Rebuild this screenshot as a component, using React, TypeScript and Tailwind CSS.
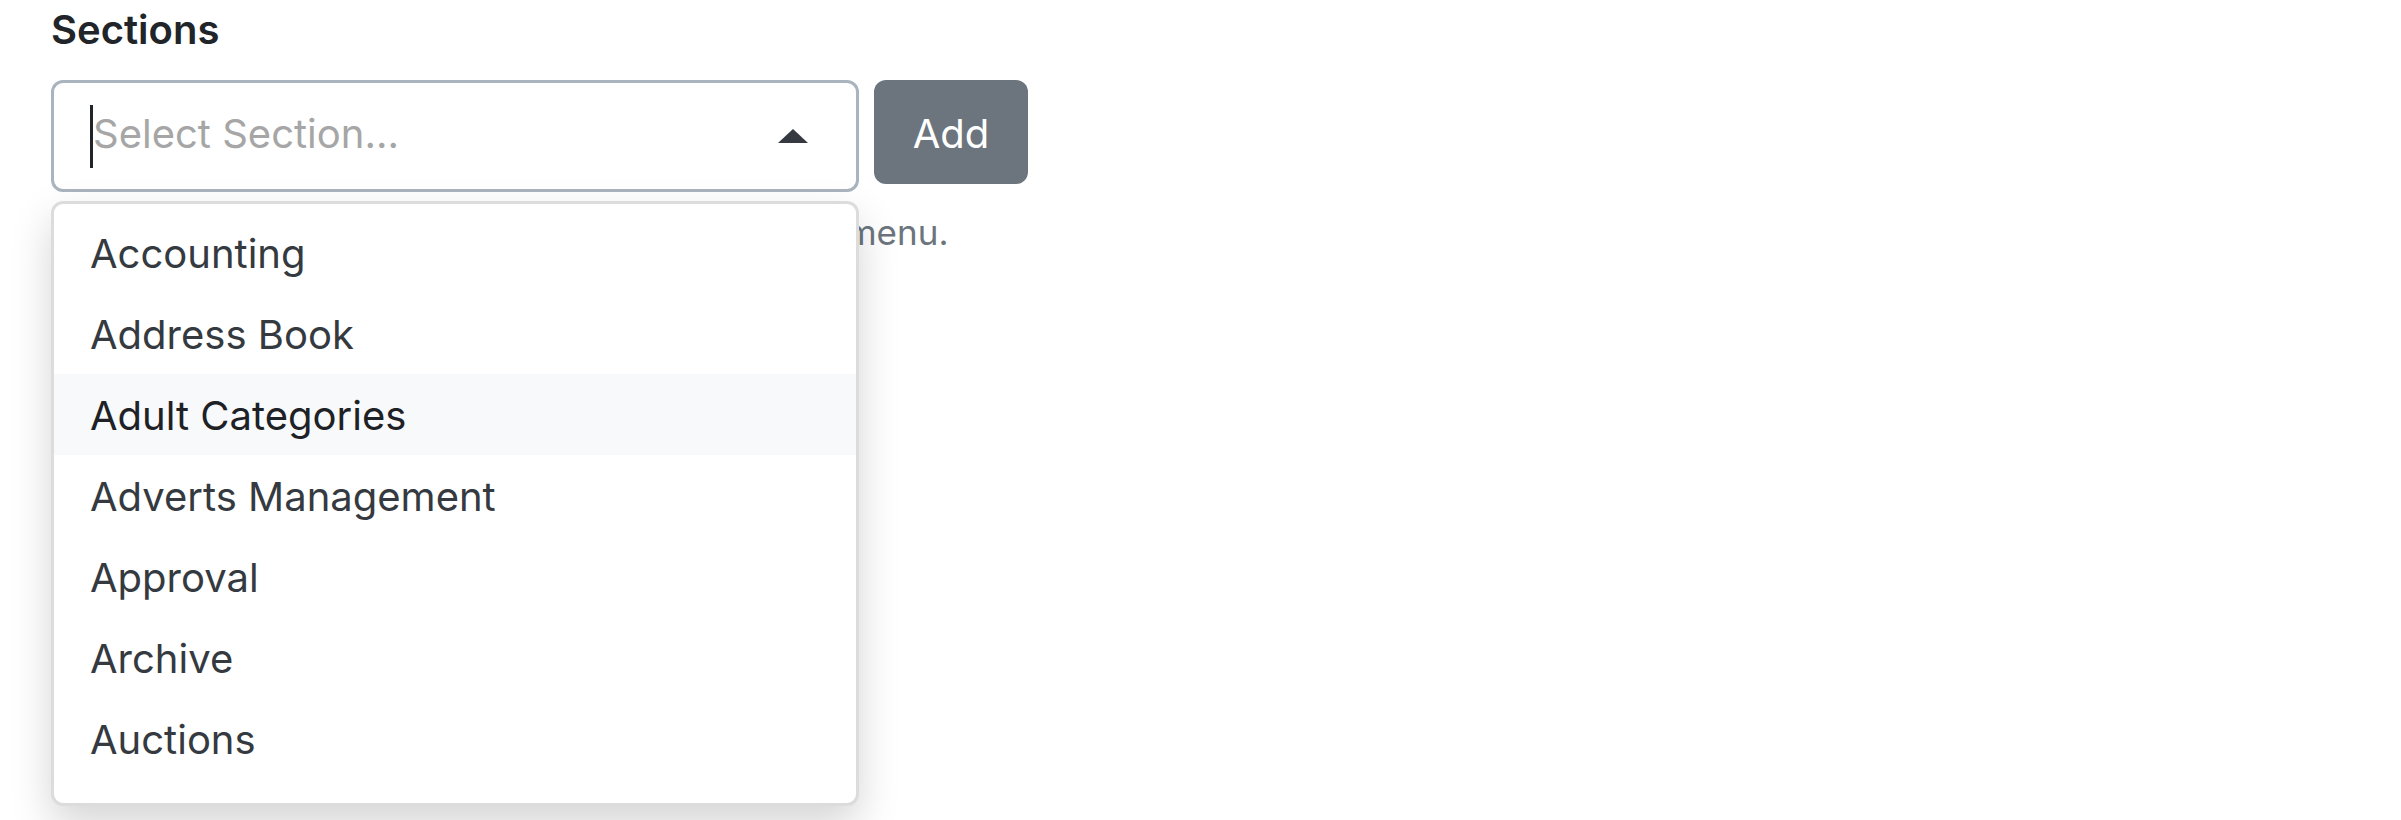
import { useState } from "react"

const SECTIONS = [
  "Accounting",
  "Address Book",
  "Adult Categories",
  "Adverts Management",
  "Approval",
  "Archive",
  "Auctions",
]

/**
 * SectionMenu
 * Open typeahead list under the select box, scrolled to the top
 */
function SectionMenu({ active }: { active: string }) {
  return (
    <div className="absolute left-0 top-[121px] z-10 h-[605px] w-full overflow-hidden rounded-[12px] border-[3px] border-[#dcdcdc] bg-white pt-[8px] shadow-[0_18px_40px_rgba(0,0,0,0.17)]">
      {SECTIONS.map((name) => (
        <div
          key={name}
          className={
            name === active
              ? "flex h-[81px] items-center bg-[#f8f9fa] pl-[36px] pt-[3px] text-[40px] text-[#1e2125]"
              : "flex h-[81px] items-center pl-[36px] pt-[3px] text-[40px] text-[#343a40]"
          }
        >
          {name}
        </div>
      ))}
    </div>
  )
}

export default function App() {
  const [active] = useState("Adult Categories")

  return (
    <div className="min-h-[820px] bg-white px-[51px] font-['Inter',sans-serif]">
      <label className="mb-[20px] block text-[40px] font-semibold leading-[60px] text-[#212529]">
        Sections
      </label>

      <div className="flex items-start gap-[15px]">
        {/* Select box with open menu */}
        <div className="relative w-[808px]">
          <div className="flex h-[112px] items-center rounded-[12px] border-[3px] border-[#aab4be] bg-white pl-[36px] pr-[48px]">
            <span className="h-[63px] w-[3px] shrink-0 bg-[#212529]" />
            <span className="flex-1 pb-[5px] text-[40px] text-[#a6a6a6]">
              Select Section...
            </span>
            <span className="h-0 w-0 border-x-[15px] border-b-[14px] border-x-transparent border-b-[#343a40]" />
          </div>
          <SectionMenu active={active} />
        </div>

        <button className="h-[104px] w-[154px] rounded-[12px] bg-[#6c757d] pt-[3px] text-[40px] text-white">
          Add
        </button>
      </div>

      <p className="mt-[14px] text-[35px] leading-[52px] text-[#6c757d]">
        Select a section, then add it from the dropdown menu.
      </p>
    </div>
  )
}
